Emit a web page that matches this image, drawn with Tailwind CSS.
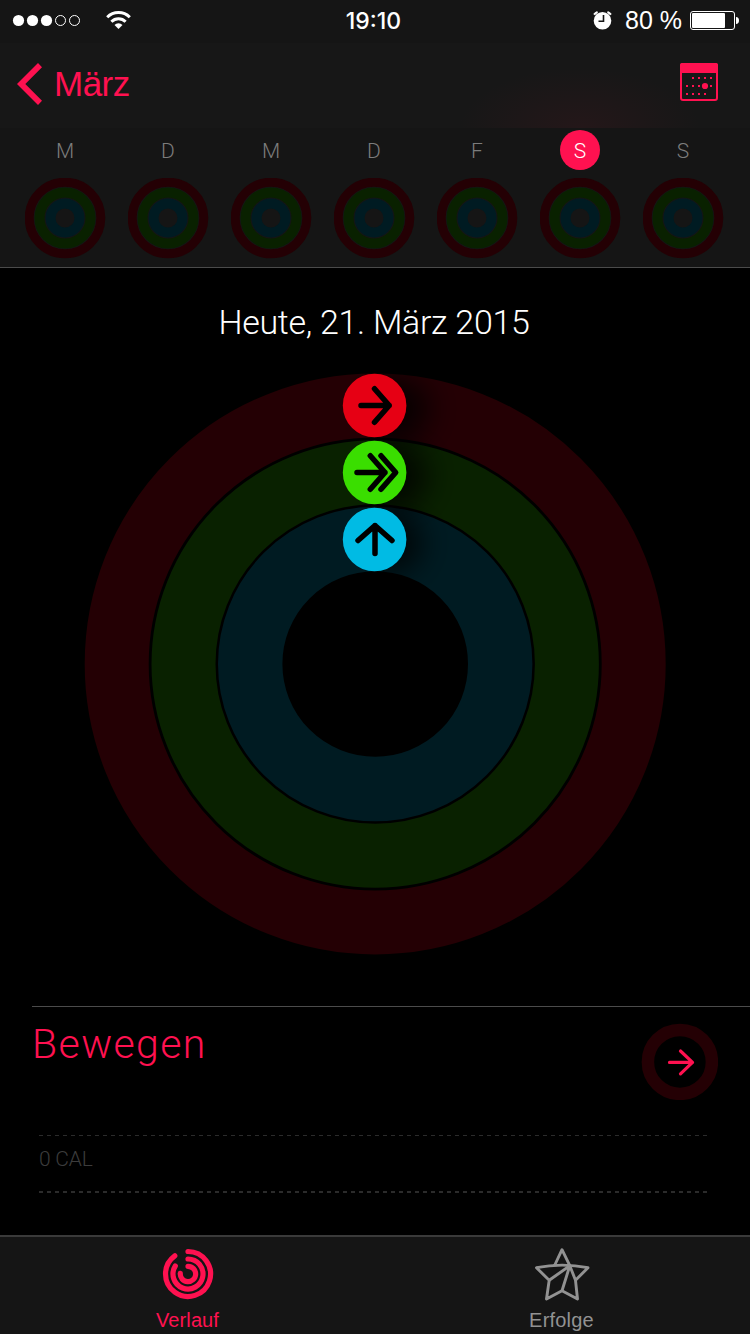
<!DOCTYPE html>
<html lang="de">
<head>
  <meta charset="UTF-8" />
  <meta name="viewport" content="width=device-width, initial-scale=1.0" />
  <title>Aktivität</title>
  <script src="https://cdn.jsdelivr.net/npm/@tailwindcss/browser@4"></script>
</head>
<body class="bg-black">
  <div class="w-[750px] h-[1334px] flex flex-col overflow-hidden bg-black font-['Roboto',sans-serif]">

    <header class="h-[268px] shrink-0 bg-[#151515] border-b border-[#4b4b4b]">
      <!-- status bar -->
      <div class="h-[43px] px-3 grid grid-cols-3 items-center text-white font-['Liberation_Sans',sans-serif]">
        <svg class="w-[122px] h-[43px]" viewBox="12 0 122 43" fill="#fff">
          <circle cx="18.5" cy="20.5" r="5.6" />
          <circle cx="32.5" cy="20.5" r="5.6" />
          <circle cx="46.5" cy="20.5" r="5.6" />
          <circle cx="60.5" cy="20.5" r="5" fill="none" stroke="#fff" />
          <circle cx="74.5" cy="20.5" r="5" fill="none" stroke="#fff" />
          <g fill="none" stroke="#fff" stroke-width="3">
            <path d="M107.2 17.2a16 16 0 0 1 22.6 0" />
            <path d="M111.4 21.8a10 10 0 0 1 14.2 0" />
          </g>
          <path d="M118.5 29l-4-4a5.7 5.7 0 0 1 8 0z" />
        </svg>
        <div class="text-center text-[23px] font-['Inter',sans-serif] font-medium leading-[43px] pr-[3px]">19:10</div>
        <div class="flex items-center justify-end -mr-[1px]">
          <svg class="w-5 h-[43px] mr-3" viewBox="593 0 20 43">
            <circle cx="602.5" cy="20.8" r="8.8" fill="#fff" />
            <path d="M594 14.6a10 10 0 0 1 3.6-2.6M607.4 12a10 10 0 0 1 3.6 2.6" fill="none" stroke="#fff" stroke-width="2" />
            <path d="M603.5 15v6.3h-5" fill="none" stroke="#151515" stroke-width="1.6" />
          </svg>
          <span class="h-[43px] text-[25px] leading-[41px] whitespace-nowrap mr-2">80 %</span>
          <svg class="w-[49px] h-[43px]" viewBox="690 0 49 43">
            <rect x="690.5" y="11.5" width="44" height="18" rx="2.5" fill="none" stroke="#fff" />
            <rect x="692" y="13" width="33" height="15" rx="1" fill="#fff" />
            <path d="M736 17c2 0 3 1.5 3 3.5s-1 3.5-3 3.5z" fill="#fff" />
          </svg>
        </div>
      </div>

      <!-- navigation -->
      <div class="h-[85px] pl-[17px] pr-8 flex justify-between items-start bg-[#171717] bg-[radial-gradient(ellipse_120px_60px_at_580px_100%,#241719,transparent)]">
        <div class="flex items-start">
          <svg class="w-[25px] h-[42px] mt-5" viewBox="0 0 25 42" fill="#ff1150"><path d="M21 0l4 4.2L8.3 21 25 37.8 21 42 0 21z" /></svg>
          <span class="ml-3 mt-5 text-[35px] leading-[42px] tracking-[-0.5px] text-[#ff1150] font-['Liberation_Sans',sans-serif]">März</span>
        </div>
        <svg class="w-[38px] h-[38px] mt-5" viewBox="0 0 38 38" fill="#ff1150">
          <rect x="1" y="1" width="36" height="36" rx="2" fill="none" stroke="#ff1150" stroke-width="2" />
          <path d="M0 10V2a2 2 0 0 1 2-2h34a2 2 0 0 1 2 2v8z" />
          <path d="M12 14h2v2h-2zM18 14h2v2h-2zM24 14h2v2h-2zM30 14h2v2h-2zM6 22h2v2H6zM12 22h2v2h-2zM18 22h2v2h-2zM30 22h2v2h-2zM6 30h2v2H6zM12 30h2v2h-2zM18 30h2v2h-2zM24 30h2v2h-2z" />
          <circle cx="25" cy="23" r="3.1" />
        </svg>
      </div>

      <!-- week strip -->
      <div id="week" class="ml-[13.5px] w-[721px] grid grid-cols-7 pt-0.5"></div>
    </header>

    <main class="grow flex flex-col">
      <h1 class="mt-[33px] text-center text-[34px] leading-[42px] font-light text-white pr-0.5 tracking-[-0.3px]">Heute, 21. März 2015</h1>

      <svg class="mt-[22px] ml-[75px] w-[600px] h-[600px] shrink-0" viewBox="75 365 600 600" fill="none">
        <defs>
          <filter id="soft" x="-100%" y="-100%" width="300%" height="300%"><feGaussianBlur stdDeviation="15" /></filter>
          <clipPath id="right"><rect x="375" y="365" width="150" height="220" /></clipPath>
        </defs>
        <circle cx="375.2" cy="664" r="258.5" stroke="#240004" stroke-width="64" />
        <circle cx="375.2" cy="664" r="191.7" stroke="#092100" stroke-width="64" />
        <circle cx="375.2" cy="664" r="125" stroke="#001b22" stroke-width="64.4" />
        <g clip-path="url(#right)" fill="#000" fill-opacity=".8">
          <ellipse cx="392" cy="409" rx="38" ry="32" filter="url(#soft)" />
          <ellipse cx="391" cy="476" rx="37" ry="32" filter="url(#soft)" />
          <ellipse cx="389" cy="543" rx="33" ry="30" filter="url(#soft)" />
        </g>
        <circle cx="374.6" cy="405.5" r="31.8" fill="#e60014" />
        <circle cx="374.6" cy="472.5" r="31.8" fill="#3ade00" />
        <circle cx="374.6" cy="539.5" r="31.8" fill="#00bbe4" />
        <g stroke="#000" stroke-width="5.5" stroke-linecap="round" stroke-linejoin="round">
          <path d="M361 405.5h28.2M374.5 388.7l14.7 16.8-14.7 16.8" />
          <path d="M357 472.5h28M370.3 455.7l14.7 16.8-14.7 16.8M381 455.7l14.7 16.8-14.7 16.8" />
          <path d="M375 553.5v-28M358 540.5l17-15 17 15" />
        </g>
      </svg>

      <section class="mt-[41px] ml-8 border-t border-[#4b4b4b]">
        <div class="flex justify-between pr-8">
          <h2 class="mt-3 text-[41px] leading-[50px] font-light tracking-[1.4px] text-[#ff1150]">Bewegen</h2>
          <svg class="w-[77px] h-[77px] mt-4" viewBox="0 0 77 77" fill="none">
            <circle cx="38.9" cy="38.9" r="32" stroke="#240004" stroke-width="12.5" />
            <path d="M28.5 39.4h23M39.5 28l12 11.4-12 11.4" stroke="#ff1150" stroke-width="3.2" stroke-linecap="round" stroke-linejoin="round" />
          </svg>
        </div>
        <div class="ml-[7px] mt-[35px] w-[668px]">
          <div class="h-px bg-[repeating-linear-gradient(90deg,#2b2b2b_0_4px,transparent_4px_8px)]"></div>
          <p class="h-[55px] pt-[9px] text-[21px] leading-7 font-light tracking-[-0.2px] text-[#3c3c3c]">0 CAL</p>
          <div class="h-0.5 bg-[repeating-linear-gradient(90deg,#2b2b2b_0_4px,transparent_4px_8px)]"></div>
        </div>
      </section>
    </main>

    <nav class="h-[99px] shrink-0 grid grid-cols-2 bg-[#151515] border-t-2 border-[#3a3a3a] text-xl leading-6 font-['Liberation_Sans',sans-serif]">
      <div class="flex flex-col items-center text-[#ff1150]">
        <svg class="w-[52px] h-[52px] mt-[11px]" viewBox="0 0 52 52" fill="none" stroke="currentColor" stroke-width="5.2" stroke-linecap="round">
          <path d="M26 3.5A22.5 22.5 0 1 1 12.8 7.8" />
          <path d="M26 11A15 15 0 1 1 13.3 18" />
          <path d="M26 18.3A7.7 7.7 0 1 1 18.3 25.3" />
        </svg>
        <span class="mt-2 tracking-[0.1px]">Verlauf</span>
      </div>
      <div class="flex flex-col items-center pr-0.5 text-[#929292]">
        <svg class="w-14 h-[54px] mt-[11px]" viewBox="34 23 56 54" fill="none" stroke="currentColor" stroke-width="2.9" stroke-linejoin="round">
          <path d="M54.8 40L62 24.7 69.8 40.7M36.5 42.7Q62 37.5 88 42.7L75.5 55.3l2 18.7L62 65.7 46.5 74l2.7-18.7z" />
          <path d="M49.2 55.3L69.8 40.7 62 65.7M69.8 40.7l5.7 14.6" />
        </svg>
        <span class="mt-1.5 tracking-[0.2px]">Erfolge</span>
      </div>
    </nav>
  </div>

  <script>
    const days = ['M', 'D', 'M', 'D', 'F', 'S', 'S'];
    const today = 5;

    document.getElementById('week').innerHTML = days.map((day, i) => `
      <div class="flex flex-col items-center">
        <span class="w-10 h-10 rounded-full text-center text-[21px] leading-[42px] font-light ${i === today ? 'bg-[#ff1150] text-white' : 'text-[#7c7c7c]'}">${day}</span>
        <svg class="w-[81px] h-[81px] mt-2" viewBox="0 0 81 81" fill="none">
          <circle cx="40" cy="40" r="35.8" stroke="#240004" stroke-width="9" />
          <circle cx="40" cy="40" r="25.5" stroke="#092100" stroke-width="10" />
          <circle cx="40" cy="40" r="14.5" stroke="#001b22" stroke-width="10" />
        </svg>
      </div>`).join('');
  </script>
</body>
</html>
